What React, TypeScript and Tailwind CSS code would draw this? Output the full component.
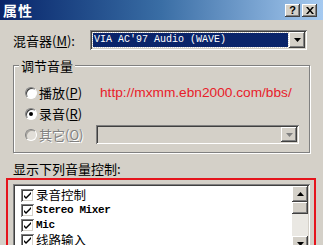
import React from "react";

const raised =
  "shadow-[inset_-1px_-1px_#404040,inset_1px_1px_#ffffff,inset_-2px_-2px_#808080,inset_2px_2px_#d4d0c8]";
const sunken =
  "shadow-[inset_1px_1px_#808080,inset_-1px_-1px_#ffffff,inset_2px_2px_#404040,inset_-2px_-2px_#d4d0c8]";

const Arrow = ({ up = false, color = "#000" }: { up?: boolean; color?: string }) => (
  <svg width="7" height="4" viewBox="0 0 7 4">
    <path d={up ? "M3.5 0 L7 4 L0 4 Z" : "M0 0 L7 0 L3.5 4 Z"} fill={color} />
  </svg>
);

const Radio = ({ checked = false, disabled = false }: { checked?: boolean; disabled?: boolean }) => (
  <span className="relative w-3 h-3 rounded-full bg-white border border-t-[#808080] border-l-[#808080] border-b-white border-r-white shadow-[inset_1px_1px_#404040] flex items-center justify-center">
    {checked && <span className={`w-1 h-1 rounded-full ${disabled ? "bg-[#808080]" : "bg-black"}`}></span>}
    {disabled && <span className="absolute inset-0 rounded-full bg-[#d4d0c8]/70"></span>}
  </span>
);

const Check = () => (
  <span className={`w-[13px] h-[13px] shrink-0 bg-white ${sunken} flex items-center justify-center`}>
    <svg width="7" height="7" viewBox="0 0 7 7">
      <path d="M0 3 L2 5 L7 0 L7 2 L2 7 L0 5 Z" fill="#000" />
    </svg>
  </span>
);

// cjk items render in the regular dialog font, latin ones in the fixed-width one
const items = [
  { t: "录音控制", cjk: true },
  { t: "Stereo Mixer", cjk: false },
  { t: "Mic", cjk: false },
  { t: "线路输入", cjk: true },
];

export default function App() {
  return (
    <div className="w-[323px] h-[245px] overflow-hidden bg-[#d4d0c8] relative font-['Noto_Sans_CJK_SC',sans-serif] text-black">
      {/* title bar */}
      <div className="h-[20px] flex items-center justify-between pl-[3px] pr-[6px] bg-gradient-to-r from-[#0a246a] via-[#3a6ea5] to-[#a6caf0]">
        <span className="text-white font-bold text-[14px] leading-none tracking-[1px]">属性</span>
        <div className="flex gap-[2px]">
          <span className={`w-[15px] h-[13px] bg-[#d4d0c8] ${raised} flex items-center justify-center text-[11px] font-bold font-['Liberation_Sans',sans-serif] leading-none`}>?</span>
          <span className={`w-[15px] h-[13px] bg-[#d4d0c8] ${raised} flex items-center justify-center`}>
            <svg width="8" height="7" viewBox="0 0 8 7">
              <path d="M0 0 L2 0 L4 2.5 L6 0 L8 0 L5 3.5 L8 7 L6 7 L4 4.5 L2 7 L0 7 L3 3.5 Z" fill="#000" />
            </svg>
          </span>
        </div>
      </div>

      {/* mixer row */}
      <div className="flex items-center mt-[10px] pl-[13px] h-[20px]">
        <span className="w-[77px] text-[13px] leading-none">混音器(<u>M</u>):</span>
        <div className={`w-[217px] h-[20px] bg-white ${sunken} p-[2px] flex items-center`}>
          <div className="flex-1 h-full p-[1px]">
            <div className="h-full bg-[#0a246a] outline outline-1 outline-dotted outline-[#d4d0c8] text-white font-['Liberation_Mono',monospace] text-[10px] leading-[14px] pl-[1px]">
              VIA AC'97 Audio (WAVE)
            </div>
          </div>
          <span className={`w-[16px] h-full bg-[#d4d0c8] ${raised} flex items-center justify-center`}>
            <Arrow />
          </span>
        </div>
      </div>

      {/* group box */}
      <div className="relative mx-[13px] mt-[15px] h-[88px] border border-[#808080] shadow-[inset_1px_1px_#ffffff,1px_1px_#ffffff] pl-[11px] pt-[16px]">
        <span className="absolute left-[5px] -top-[8px] px-[2px] bg-[#d4d0c8] text-[13px] leading-[15px]">调节音量</span>
        <div className="flex items-center h-[21px]">
          <Radio />
          <span className="ml-[2px] w-[61px] text-[13px] leading-none">播放(<u>P</u>)</span>
          <span className="text-[#e8202a] text-[13.7px] leading-none font-['Liberation_Sans',sans-serif]">http://mxmm.ebn2000.com/bbs/</span>
        </div>
        <div className="flex items-center h-[21px]">
          <Radio checked />
          <span className="ml-[2px] text-[13px] leading-none">录音(<u>R</u>)</span>
        </div>
        <div className="flex items-center h-[21px]">
          <Radio disabled />
          <span className="ml-[2px] w-[57px] text-[13px] leading-none text-[#808080] [text-shadow:1px_1px_#ffffff]">其它(<u>O</u>)</span>
          <div className={`w-[203px] h-[19px] bg-[#d4d0c8] ${sunken} p-[2px] flex justify-end`}>
            <span className={`w-[16px] h-full bg-[#d4d0c8] ${raised} flex items-center justify-center`}>
              <Arrow color="#808080" />
            </span>
          </div>
        </div>
      </div>

      {/* list label */}
      <div className="pl-[13px] mt-[8px] text-[13px] leading-[15px]">显示下列音量控制:</div>

      {/* list */}
      <div className={`mx-[13px] mt-[8px] h-[70px] bg-white ${sunken} p-[2px] flex`}>
        <div className="flex-1 pl-[6px] pt-[2px]">
          {items.map((it) => (
            <div key={it.t} className="flex items-center h-[15px] gap-[2px]">
              <Check />
              {it.cjk ? (
                <span className="text-[12.5px] leading-none">{it.t}</span>
              ) : (
                <span className="font-['Liberation_Mono',monospace] text-[11px] font-bold leading-none tracking-[-0.4px]">{it.t}</span>
              )}
            </div>
          ))}
        </div>
        <div className="w-[16px] flex flex-col bg-[#eae8e3]">
          <span className={`h-[16px] bg-[#d4d0c8] ${raised} flex items-center justify-center`}>
            <Arrow up />
          </span>
          <span className={`h-[12px] bg-[#d4d0c8] ${raised}`}></span>
          <span className="flex-1"></span>
          <span className={`h-[16px] bg-[#d4d0c8] ${raised} flex items-center justify-center`}>
            <Arrow />
          </span>
        </div>
      </div>

      {/* red highlight annotation */}
      <div className="absolute left-[6px] top-[178px] w-[310px] h-[80px] border-2 border-[#e5141c]"></div>
    </div>
  );
}
